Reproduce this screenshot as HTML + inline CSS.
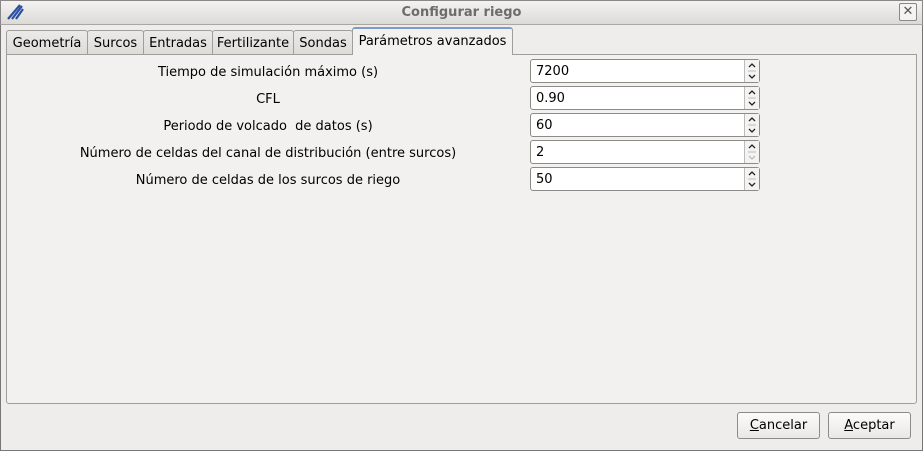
<!DOCTYPE html><html><head><style>
body{margin:0;width:923px;height:451px;background:#efedeb;font-family:"DejaVu Sans","Liberation Sans",sans-serif;font-size:13px;color:#000;position:relative;overflow:hidden}
.a{position:absolute;white-space:nowrap}
.title{left:0;top:0;width:921px;height:23px;background:linear-gradient(#f4f3f2,#dcdad7);border:1px solid #8a8886;border-bottom-color:#a9a7a4;text-align:center;line-height:23px;font-weight:bold;color:#6e6c6a;font-size:13px}
.frame{left:0;top:0;width:921px;height:449px;border:1px solid #777}
.tab{top:30px;height:24px;border:1px solid #a09e9b;border-bottom:none;background:linear-gradient(#eceae7,#dedcd9);line-height:26px;text-align:center;box-sizing:border-box;border-radius:3px 3px 0 0}
.pane{left:6px;top:54px;width:911px;height:350px;border:1px solid #a09e9b;border-radius:0 0 3px 3px;box-sizing:border-box;background:#f2f1f0}
.lab{width:520px;text-align:center;left:8px}
.sp{left:530px;width:230px;height:24px;border:1px solid #8d8b88;border-radius:3px;background:#fff;box-sizing:border-box}
.sp span{position:absolute;left:5px;top:4px}
.sp svg{position:absolute;right:0;top:0;border-left:1px solid #bbb;background:#f4f3f2}
.btn{top:412px;height:27px;border:1px solid #8d8b88;border-radius:3px;background:linear-gradient(#fbfbfa,#eae8e6);text-align:center;line-height:26px;box-sizing:border-box}
</style></head><body>
<div class="a frame"></div>
<div class="a title">Configurar riego</div>
<svg class="a" style="left:6px;top:3px" width="18" height="18" viewBox="0 0 18 18"><path d="M2 16L14 2M6 16L16 3M10 16L17 6" stroke="#2a4fa0" stroke-width="2.2" fill="none"/></svg>
<div class="a" style="left:899px;top:3px;width:16px;height:16px;border:1px solid #888;border-radius:2px;background:#f4f3f2;text-align:center;line-height:15px;font-weight:bold;color:#555">✕</div>
<div class="a pane"></div>
<div class="a tab" style="left:6px;width:82px">Geometría</div>
<div class="a tab" style="left:87px;width:57px">Surcos</div>
<div class="a tab" style="left:143px;width:70px">Entradas</div>
<div class="a tab" style="left:212px;width:82px">Fertilizante</div>
<div class="a tab" style="left:293px;width:60px">Sondas</div>
<div class="a tab" style="left:352px;top:27px;height:28px;width:161px;background:#f2f1f0;border-top:2px solid #7d9cc8;line-height:26px">Parámetros avanzados</div>
<div class="a lab" style="top:65px">Tiempo de simulación máximo (s)</div>
<div class="a lab" style="top:92px">CFL</div>
<div class="a lab" style="top:119px">Periodo de volcado&nbsp; de datos (s)</div>
<div class="a lab" style="top:146px">Número de celdas del canal de distribución (entre surcos)</div>
<div class="a lab" style="top:173px">Número de celdas de los surcos de riego</div>
<div class="a sp" style="top:59px"><span>7200</span><svg width="14" height="22"><path d="M4 7l3-3 3 3" stroke="#222" stroke-width="1.3" fill="none"/><path d="M3 11h8" stroke="#bbb"/><path d="M4 15l3 3 3-3" stroke="#222" stroke-width="1.3" fill="none"/></svg></div>
<div class="a sp" style="top:86px"><span>0.90</span><svg width="14" height="22"><path d="M4 7l3-3 3 3" stroke="#222" stroke-width="1.3" fill="none"/><path d="M3 11h8" stroke="#bbb"/><path d="M4 15l3 3 3-3" stroke="#222" stroke-width="1.3" fill="none"/></svg></div>
<div class="a sp" style="top:113px"><span>60</span><svg width="14" height="22"><path d="M4 7l3-3 3 3" stroke="#222" stroke-width="1.3" fill="none"/><path d="M3 11h8" stroke="#bbb"/><path d="M4 15l3 3 3-3" stroke="#222" stroke-width="1.3" fill="none"/></svg></div>
<div class="a sp" style="top:140px"><span>2</span><svg width="14" height="22"><path d="M4 7l3-3 3 3" stroke="#222" stroke-width="1.3" fill="none"/><path d="M3 11h8" stroke="#bbb"/><path d="M4 15l3 3 3-3" stroke="#bbb" stroke-width="1.3" fill="none"/></svg></div>
<div class="a sp" style="top:167px"><span>50</span><svg width="14" height="22"><path d="M4 7l3-3 3 3" stroke="#222" stroke-width="1.3" fill="none"/><path d="M3 11h8" stroke="#bbb"/><path d="M4 15l3 3 3-3" stroke="#222" stroke-width="1.3" fill="none"/></svg></div>
<div class="a btn" style="left:737px;width:83px"><u>C</u>ancelar</div>
<div class="a btn" style="left:828px;width:83px"><u>A</u>ceptar</div>
</body></html>
